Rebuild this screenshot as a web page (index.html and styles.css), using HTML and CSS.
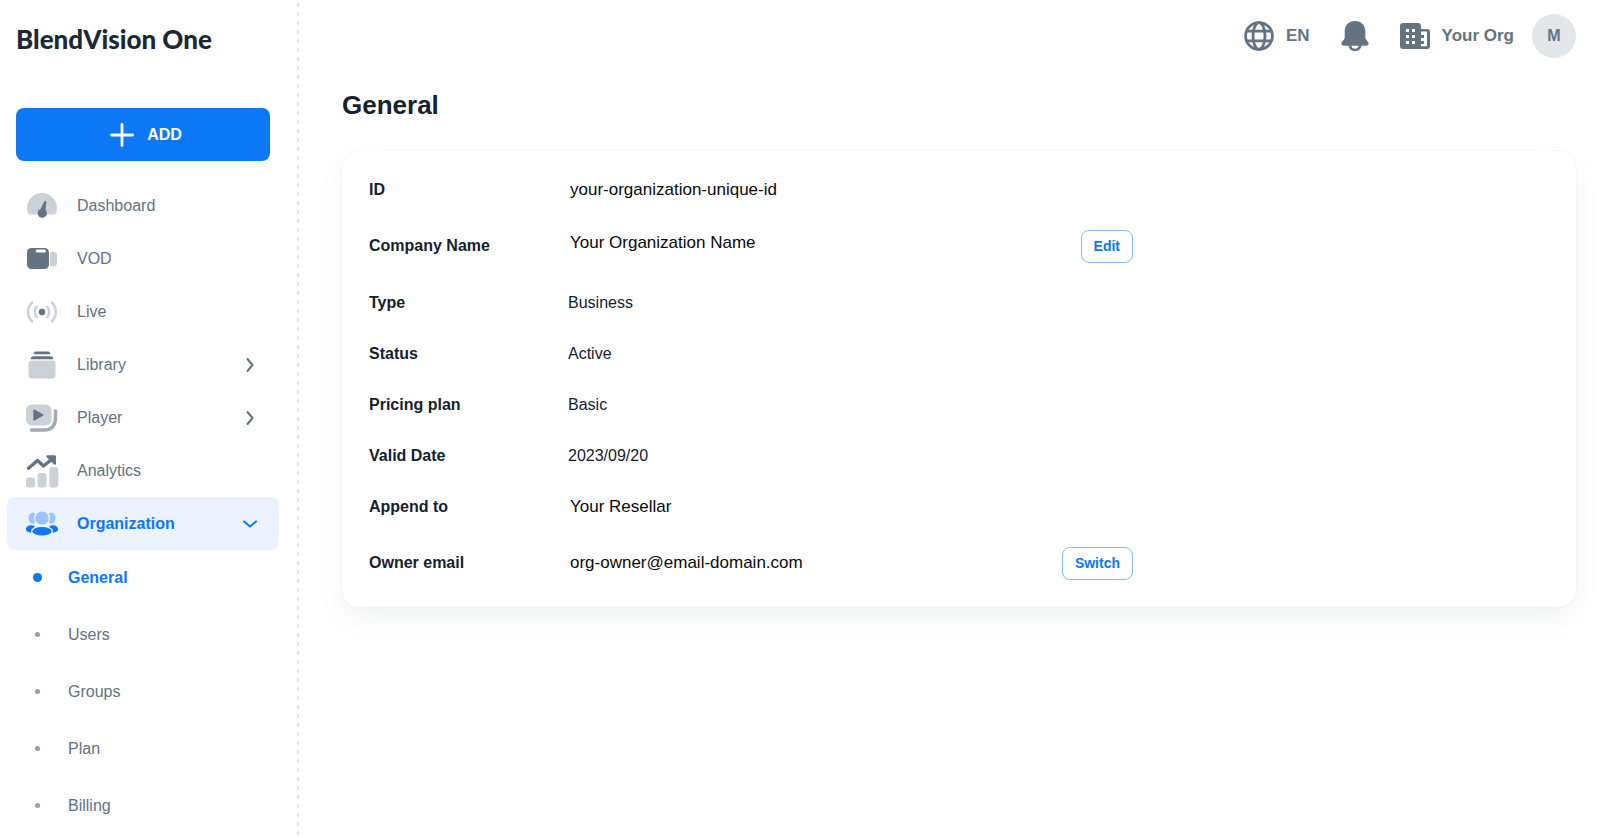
FILE: index.html
```html
<!DOCTYPE html>
<html lang="en">
<head>
<meta charset="utf-8">
<title>BlendVision One – General</title>
<link rel="stylesheet" href="styles.css">
</head>
<body>
<div class="app">
  <aside class="sidebar">
    <div class="brand">BlendVision One</div>
    <button class="add" type="button">
      <svg class="add-icon" viewBox="0 0 24 24" aria-hidden="true"><path d="M12 1.500v21M1.500 12h21" fill="none" stroke="#fff" stroke-width="2.800" stroke-linecap="round"/></svg>
      <span>ADD</span>
    </button>
    <nav>
      <ul class="menu">
        <li><a class="item" href="#"><svg class="icon" viewBox="0 0 34 34" aria-hidden="true"><path class="soft" d="M5 25.500C3 25.500 2 22.500 2 19a15 15 0 0 1 30 0c0 3.500-1 6.500-3 6.500z"/><path class="dark" d="M19.300 12.400a1.100 1.100 0 0 1 2 .5l-.8 8a4.600 4.600 0 1 1-4.900-1z"/></svg><span>Dashboard</span></a></li>
        <li><a class="item" href="#"><svg class="icon" viewBox="0 0 34 34" aria-hidden="true"><rect class="soft" x="24" y="9.500" width="8" height="15" rx="4"/><rect x="1" y="5" width="24" height="23" fill="#fff"/><rect class="dark" x="2" y="6" width="22" height="21" rx="4.500"/><rect x="10.800" y="7.500" width="10" height="3" rx="1.300" fill="#fff"/></svg><span>VOD</span></a></li>
        <li><a class="item" href="#"><svg class="icon" viewBox="0 0 34 34" aria-hidden="true"><circle class="dark" cx="17" cy="17" r="3.200"/><path class="soft-line" d="M11.700 11.800a8 8 0 0 0 0 10.400M22.300 11.800a8 8 0 0 1 0 10.400M7.200 7.500c-5.400 5-5.400 14 0 19M26.800 7.500c5.400 5 5.400 14 0 19"/></svg><span>Live</span></a></li>
        <li><a class="item" href="#"><svg class="icon" viewBox="0 0 34 34" aria-hidden="true"><path class="dark" d="M8.500 6.200C8.800 4.500 9.500 3.400 11 3.400h12c1.500 0 2.200 1.100 2.500 2.800zM5.500 11.200C5.800 9.300 6.800 8.200 8.500 8.200h17c1.700 0 2.700 1.100 3 3z"/><rect class="soft" x="3.500" y="12.500" width="27" height="18" rx="3.500"/></svg><span>Library</span><svg class="chevron" viewBox="0 0 16 16" aria-hidden="true"><path d="M5.500 2l5 6-5 6"/></svg></a></li>
        <li><a class="item" href="#"><svg class="icon" viewBox="0 0 34 34" aria-hidden="true"><rect class="soft" x="1" y="3.500" width="25.500" height="21" rx="6"/><path class="dark" d="M8.300 9.300c0-.8.600-1.100 1.200-.8l8.400 4.700c.7.400.7 1.100 0 1.500l-8.400 4.800c-.6.300-1.200 0-1.200-.8z"/><path d="M30.500 10v6.500C30.500 25 27 29 19 29H6.500" fill="none" stroke="#a1abb4" stroke-width="3.400" stroke-linecap="round"/></svg><span>Player</span><svg class="chevron" viewBox="0 0 16 16" aria-hidden="true"><path d="M5.500 2l5 6-5 6"/></svg></a></li>
        <li><a class="item" href="#"><svg class="icon" viewBox="0 0 34 34" aria-hidden="true"><rect class="soft" x="1" y="23.500" width="9" height="10" rx="3"/><rect class="soft" x="12.500" y="19" width="9" height="14.500" rx="3"/><rect class="soft" x="24.300" y="13" width="9" height="20.500" rx="3"/><path d="M3.500 14.200l9-7.700 6 5.500 8-6.500" fill="none" stroke="#637381" stroke-width="3.400" stroke-linecap="round" stroke-linejoin="round"/><path class="dark" d="M22.500 1.200h7c.9 0 1.500.6 1.500 1.500v7c0 1.100-1 1.500-1.800.8l-7.600-7.300c-.8-.8-.2-2 .9-2z"/></svg><span>Analytics</span></a></li>
        <li>
          <a class="item item-active" href="#"><svg class="icon" viewBox="0 0 34 34" aria-hidden="true"><ellipse cx="7.500" cy="11" rx="4" ry="5.500" fill="#9cc3fb"/><ellipse cx="26.500" cy="11" rx="4" ry="5.500" fill="#9cc3fb"/><ellipse cx="6" cy="22" rx="5.200" ry="3.700" fill="#0b78f8"/><ellipse cx="28" cy="22" rx="5.200" ry="3.700" fill="#0b78f8"/><g stroke="#ecf3fe" stroke-width="2.800" paint-order="stroke"><circle cx="17" cy="11" r="6.600" fill="#9cc3fb"/><ellipse cx="17" cy="24.300" rx="9.600" ry="4.300" fill="#0b78f8"/></g></svg><span>Organization</span><svg class="chevron" viewBox="0 0 16 16" aria-hidden="true"><path d="M2 5.500l6 5 6-5"/></svg></a>
          <ul class="submenu">
            <li><a class="subitem subitem-active" href="#" aria-current="page">General</a></li>
            <li><a class="subitem" href="#">Users</a></li>
            <li><a class="subitem" href="#">Groups</a></li>
            <li><a class="subitem" href="#">Plan</a></li>
            <li><a class="subitem" href="#">Billing</a></li>
          </ul>
        </li>
      </ul>
    </nav>
  </aside>
  <div class="page">
    <header class="topbar">
      <button class="tool" type="button"><svg class="tool-icon" viewBox="0 0 30 30" aria-hidden="true"><g fill="none" stroke="currentColor" stroke-width="2.800"><circle cx="15" cy="15" r="13.400"/><ellipse cx="15" cy="15" rx="6" ry="13.400"/><path d="M2.800 10.200h24.400M2.800 19.800h24.400"/></g></svg><span>EN</span></button>
      <button class="tool" type="button" aria-label="Notifications"><svg class="tool-icon" viewBox="0 0 30 30" aria-hidden="true"><path d="M15 0C8.500 0 4.700 4.500 4.700 10.500v6.300c0 .8-.3 1.400-.9 2l-1.700 2c-1.500 1.700-.6 3.900 1.600 3.900h4.900a6.500 6.500 0 0 0 12.800 0h4.900c2.200 0 3.100-2.200 1.600-3.900l-1.700-2c-.6-.6-.9-1.200-.9-2v-6.300C25.300 4.500 21.500 0 15 0zm-3.700 24.700h7.400a3.800 3.800 0 0 1-7.400 0z"/></svg></button>
      <button class="tool" type="button"><svg class="tool-icon" viewBox="0 0 30 30" aria-hidden="true"><path fill-rule="evenodd" d="M3 2h15a3 3 0 0 1 3 3v3h6a3 3 0 0 1 3 3v14a3 3 0 0 1-3 3H3a3 3 0 0 1-3-3V5a3 3 0 0 1 3-3zm3 6v3h3V8zm6 0v3h3V8zm-6 6v3h3v-3zm6 0v3h3v-3zm-6 6v3h3v-3zm6 0v3h3v-3zm9-9.500V14h3v3h-3v3h3v3h-3v2.300h6V10.500z"/></svg><span>Your Org</span></button>
      <button class="avatar" type="button">M</button>
    </header>
    <main class="content">
      <h1 class="title">General</h1>
      <section class="card">
        <table class="details">
          <tbody>
            <tr><th scope="row">ID</th><td class="strong">your-organization-unique-id</td><td></td></tr>
            <tr class="tall"><th scope="row">Company Name</th><td class="strong raised">Your Organization Name</td><td class="action"><button class="outline" type="button">Edit</button></td></tr>
            <tr><th scope="row">Type</th><td>Business</td><td></td></tr>
            <tr><th scope="row">Status</th><td>Active</td><td></td></tr>
            <tr><th scope="row">Pricing plan</th><td>Basic</td><td></td></tr>
            <tr><th scope="row">Valid Date</th><td>2023/09/20</td><td></td></tr>
            <tr><th scope="row">Append to</th><td class="strong">Your Resellar</td><td></td></tr>
            <tr class="tall"><th scope="row">Owner email</th><td class="strong">org-owner@email-domain.com</td><td class="action"><button class="outline" type="button">Switch</button></td></tr>
          </tbody>
        </table>
      </section>
    </main>
  </div>
</div>
</body>
</html>
```

FILE: styles.css
```css
* {
  box-sizing: border-box;
}

body {
  margin: 0;
  background: #fefefe;
  color: #16212e;
  font: 16px/24px "Liberation Sans", Arial, sans-serif;
}

button {
  border: 0;
  background: none;
  padding: 0;
  font: inherit;
  font-weight: 700;
  cursor: pointer;
}

a {
  color: inherit;
  text-decoration: none;
}

ul {
  list-style: none;
  margin: 0;
  padding: 0;
}

.app {
  display: flex;
  min-height: 100vh;
}

.sidebar {
  flex: 0 0 299px;
  background: repeating-linear-gradient(transparent 0 3px, #e4e8ea 3px 7px, transparent 7px 9px) right / 2px 100% no-repeat;
}

.brand {
  padding: 23px 16px 0;
  font: 900 26px/32px Lato, sans-serif;
  color: #1b2836;
}

.add {
  display: flex;
  align-items: center;
  justify-content: center;
  gap: 13px;
  width: 254px;
  height: 53px;
  margin: 53px 16px 18px;
  padding-left: 6px;
  border-radius: 8px;
  background: #0d78f6;
  color: #fff;
}

.add-icon {
  width: 24px;
  height: 24px;
}

.item {
  display: flex;
  align-items: center;
  height: 53px;
  margin: 0 20px 0 7px;
  padding: 0 21px 0 18px;
  border-radius: 8px;
  color: #637381;
}

.item-active {
  background: #ecf3fe;
  color: #0b78f8;
  font-weight: 700;
}

.icon {
  width: 34px;
  height: 34px;
  margin-right: 18px;
}

.soft {
  fill: #cbd1d6;
}

.dark {
  fill: #637381;
}

.soft-line {
  fill: none;
  stroke: #cbd1d6;
  stroke-width: 2.4;
  stroke-linecap: round;
}

.chevron {
  width: 16px;
  height: 16px;
  margin-left: auto;
  fill: none;
  stroke: currentColor;
  stroke-width: 2;
  stroke-linecap: round;
  stroke-linejoin: round;
}

.submenu {
  display: grid;
  gap: 4px;
  padding-top: 1px;
}

.subitem {
  display: flex;
  align-items: center;
  height: 53px;
  padding-left: 35px;
  color: #637381;
}

.subitem::before {
  content: "";
  width: 5px;
  height: 5px;
  margin-right: 28px;
  border-radius: 50%;
  background: #919eab;
}

.subitem-active {
  padding-left: 33px;
  color: #0b78f8;
  font-weight: 700;
}

.subitem-active::before {
  width: 9px;
  height: 9px;
  margin-right: 26px;
  background: #0b78f8;
}

.page {
  flex: 1;
  min-width: 0;
}

.topbar {
  display: flex;
  align-items: center;
  justify-content: flex-end;
  gap: 30px;
  height: 72px;
  padding-right: 24px;
}

.tool {
  display: flex;
  align-items: center;
  gap: 12px;
  color: #637381;
  font-size: 17px;
}

.tool-icon {
  width: 30px;
  height: 30px;
  fill: currentColor;
}

.avatar {
  width: 44px;
  height: 44px;
  margin-left: -12px;
  border-radius: 50%;
  background: #e3e7ea;
  color: #637381;
}

.content {
  padding: 17px 24px 24px 43px;
}

.title {
  margin: 0 0 30px;
  font-size: 26px;
  line-height: 32px;
}

.card {
  padding: 13px 27px;
  border-radius: 18px;
  background: #fff;
  box-shadow: 0 0 2px rgba(145, 158, 171, 0.16), 0 12px 24px -4px rgba(145, 158, 171, 0.12);
}

.details {
  width: 100%;
  max-width: 764px;
  border-collapse: collapse;
}

.details th,
.details td {
  height: 51px;
  padding: 0;
  text-align: left;
}

.details .tall th,
.details .tall td {
  height: 62px;
}

.details th {
  width: 199px;
}

.details .strong {
  padding-left: 2px;
  font-size: 17px;
  color: #0a0a0a;
}

.details .raised {
  padding-bottom: 6px;
}

.details .action {
  text-align: right;
}

.outline {
  height: 33px;
  padding: 0 12px;
  border: 1px solid #86bbfb;
  border-radius: 8px;
  color: #0b78f8;
  font-size: 14px;
  vertical-align: middle;
}
```
